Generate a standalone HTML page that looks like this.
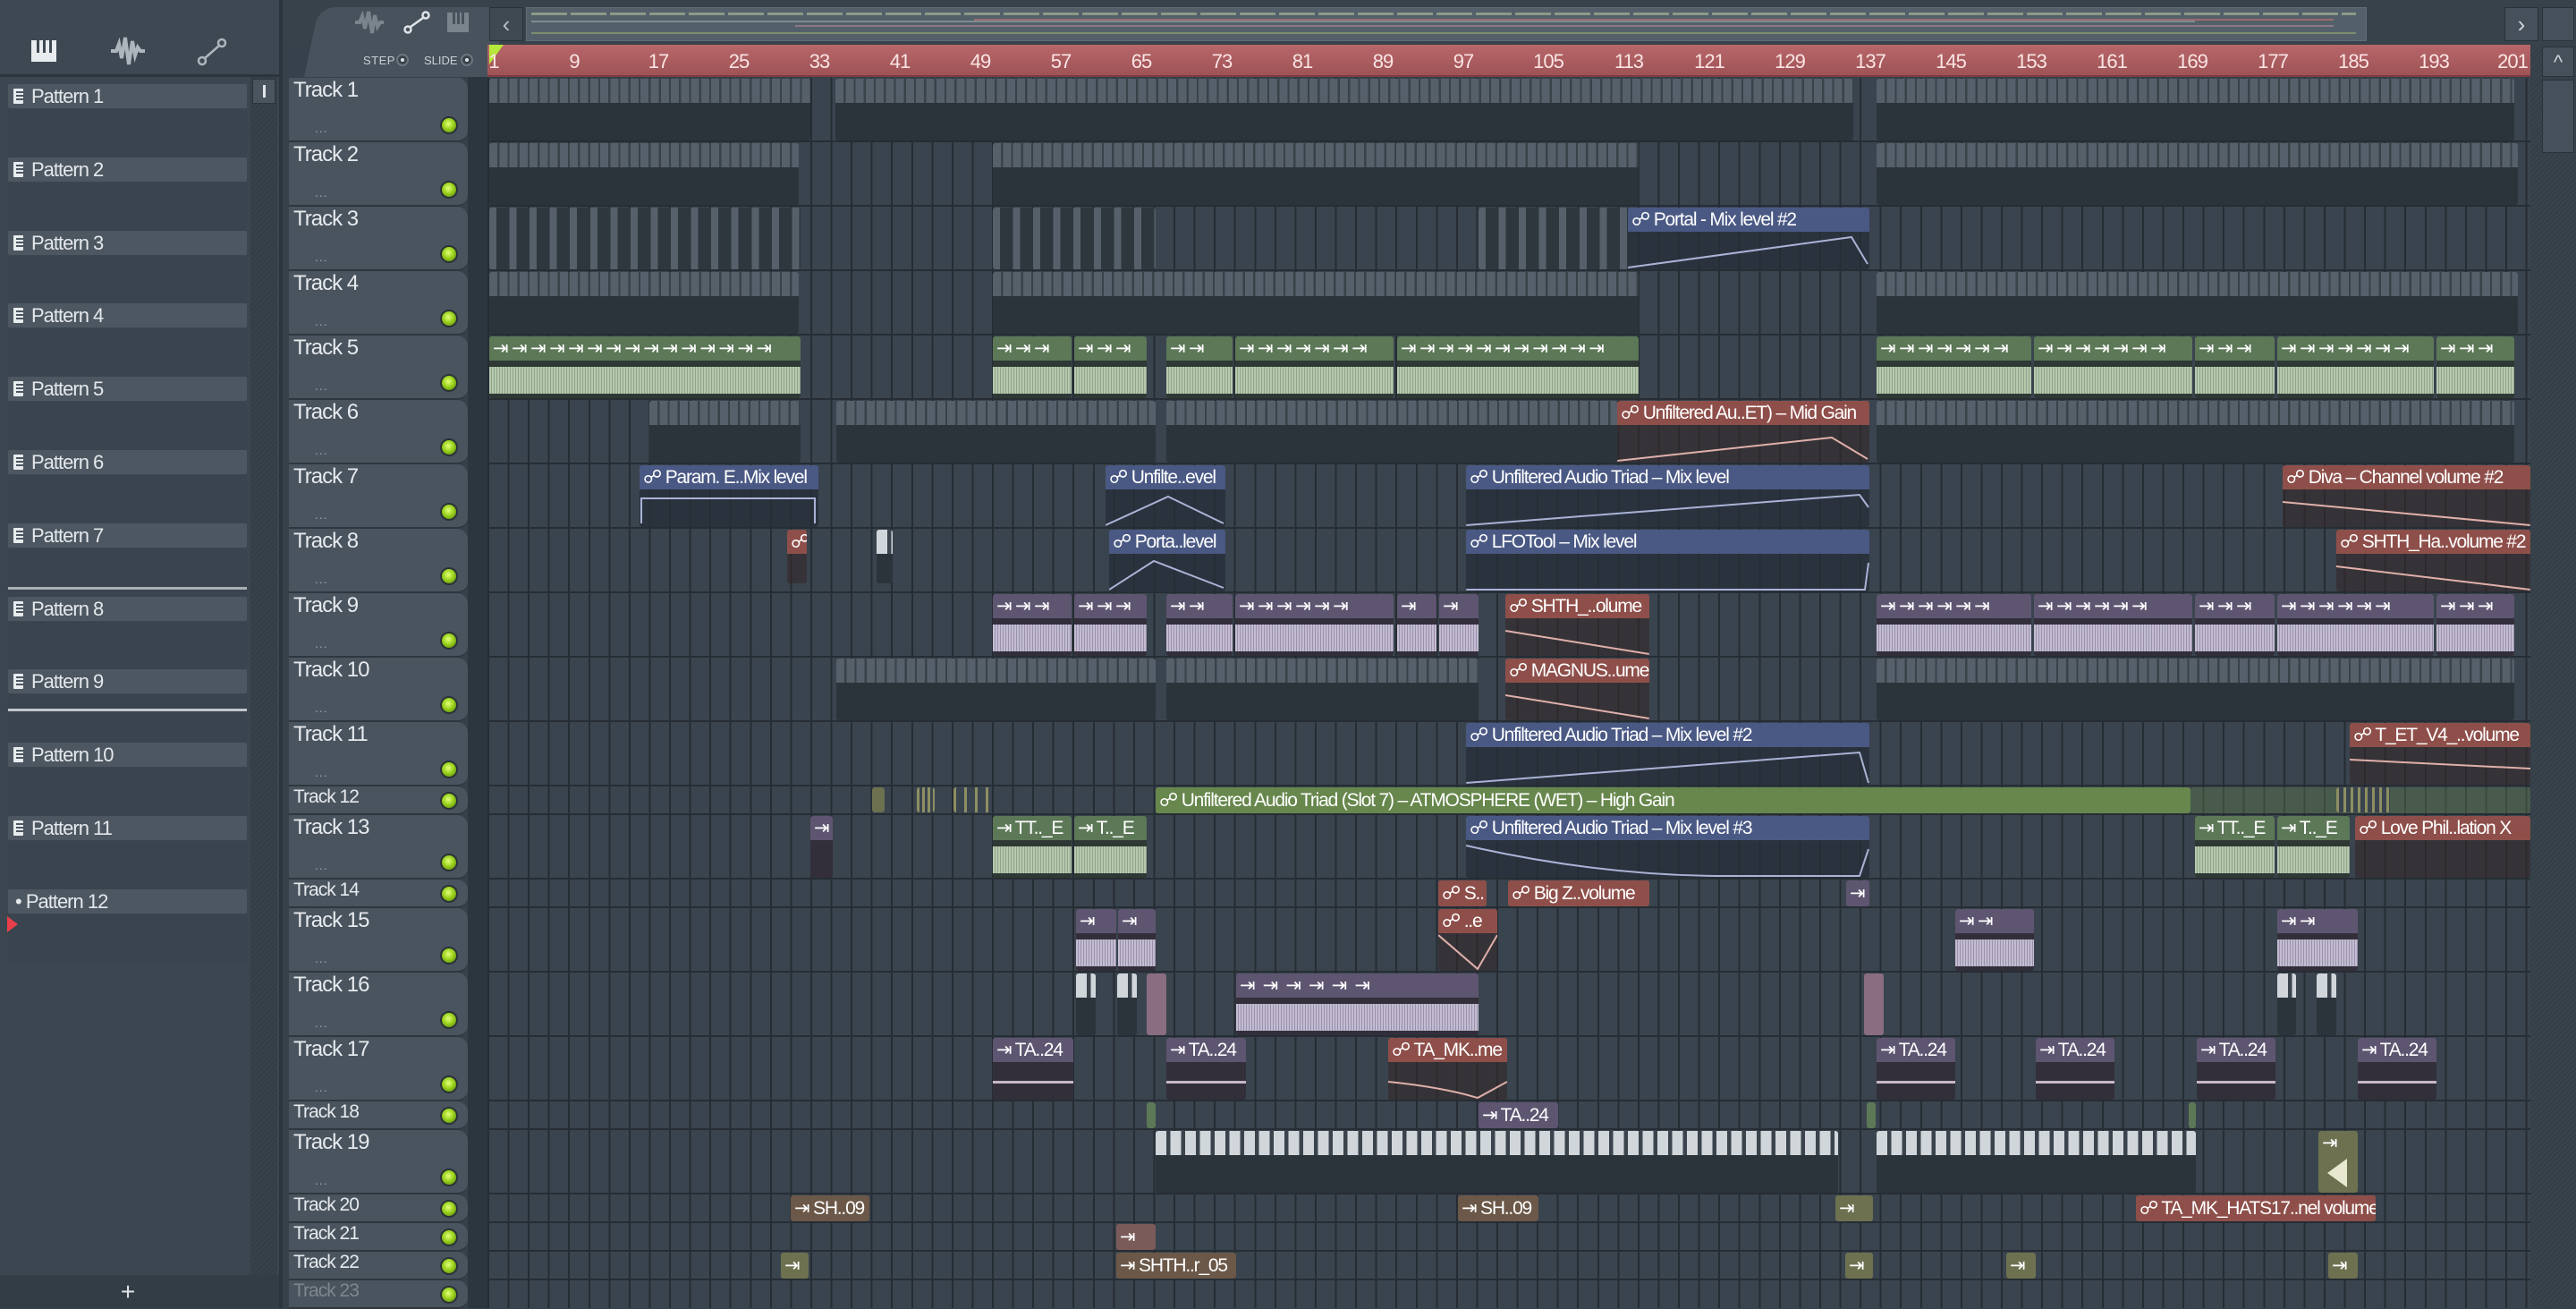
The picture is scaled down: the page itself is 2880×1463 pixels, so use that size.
<!DOCTYPE html>
<html><head><meta charset="utf-8"><style>
*{margin:0;padding:0;box-sizing:border-box}
body{width:2880px;height:1462px;overflow:hidden;background:#36414b;font-family:"Liberation Sans Narrow","Liberation Sans",sans-serif;position:relative}
.a{position:absolute}
#left{left:0;top:0;width:316px;height:1462px;background:#3c4650;border-right:4px solid #2c353d}
.ph{position:absolute;left:9px;width:267px;height:27px;background:#4d5761;color:#e4e8ec;font-size:22px;letter-spacing:-1px;line-height:27px;padding-left:26px;border-radius:2px}
.ph i{position:absolute;left:6px;top:5px;width:11px;height:17px;background:#e8ecef;border-radius:1px}
.ph i:after{content:"";position:absolute;left:3px;top:3px;width:8px;height:2px;background:#4d5761;box-shadow:0 4px 0 #4d5761,0 8px 0 #4d5761}
.pb{position:absolute;left:9px;width:267px;height:54px;background:#3a444e}
.tr{position:absolute;left:323px;width:200px;background:#4a545e;border-radius:0 12px 12px 0;color:#e6eaee;font-size:24px;letter-spacing:-1px;padding-left:5px;border-bottom:2px solid #2e373f}
.led{position:absolute;left:492px;width:20px;height:20px;border-radius:50%;background:radial-gradient(circle at 45% 40%,#e2ff7a,#9bd21e 45%,#4e7a08);border:2px solid #2a3238}
.dots{position:absolute;left:352px;color:#9aa3ab;font-size:14px;letter-spacing:1px}
#grid{left:545px;top:87px;width:2284px;height:1375px;background:repeating-linear-gradient(90deg,#252c33 0 2px,#3a444e 2px 22.56px)}
.rl{position:absolute;left:545px;width:2284px;height:2px;background:#262d34}
.c{position:absolute;overflow:hidden;border-radius:3px}
.h{height:27px;line-height:27px;font-size:21px;letter-spacing:-1.2px;color:#fff;white-space:nowrap;padding-left:4px;overflow:hidden}
.s .h{height:30px;line-height:30px}
.p{background:repeating-linear-gradient(90deg,#56606a 0 9px,#394249 9px 11.28px) top/100% 27px no-repeat,#2b333b}
.pw{background:repeating-linear-gradient(90deg,#d0d6da 0 12px,#3b444c 12px 16.5px) top/100% 27px no-repeat,#2b333b}
.ag{background:#2e3834}.ag .h{background:#5c7857}
.pu{background:#322f3b}.pu .h{background:#5e5571}
.w{position:absolute;left:0;right:0;top:34px;height:30px;background:repeating-linear-gradient(90deg,#b6c9af 0 2px,#8fa488 2px 3px)}
.pu .w{background:repeating-linear-gradient(90deg,#c3bcd2 0 2px,#9a92ab 2px 3px)}
.ab{background:rgba(38,45,56,.75)}.ab .h{background:#4a5984}
.ar{background:rgba(52,40,42,.6)}.ar .h{background:#8e4f4a}
.agr .h,.agr{background:#67874d}
.br{background:#6b5848}.ol{background:#6d7150}
.pk{background:#8a6d80}
svg.ln{position:absolute;left:0;top:27px}
.rn{position:absolute;top:56px;color:#fbe4e4;font-size:22px;letter-spacing:-1px;transform:translateX(-50%)}
</style></head><body>

<div id="left" class="a">
 <div class="a" style="left:0;top:0;width:312px;height:86px;background:#3e4852;border-bottom:3px solid #2c353d"></div>
 <svg class="a" style="left:34px;top:44px" width="30" height="26"><rect x="1" y="1" width="28" height="24" fill="#e8ecef"/><rect x="7" y="1" width="3" height="14" fill="#3e4852"/><rect x="14" y="1" width="3" height="14" fill="#3e4852"/><rect x="21" y="1" width="3" height="14" fill="#3e4852"/></svg>
 <svg class="a" style="left:122px;top:40px" width="42" height="34"><path d="M2 17H8L11 9L14 25L18 2L22 32L26 6L29 22L32 13L35 17H40" stroke="#aeb6bd" stroke-width="4" fill="none"/></svg>
 <svg class="a" style="left:220px;top:42px" width="34" height="32"><circle cx="6" cy="26" r="4" stroke="#aeb6bd" stroke-width="2.5" fill="none"/><circle cx="28" cy="6" r="4" stroke="#aeb6bd" stroke-width="2.5" fill="none"/><path d="M9 23L25 9" stroke="#aeb6bd" stroke-width="2.5"/></svg>
 <div class="a" style="left:280px;top:86px;width:30px;height:1340px;background:repeating-linear-gradient(135deg,#333d46 0 2px,#38424b 2px 4px)"></div>
 <div class="a" style="left:282px;top:88px;width:26px;height:28px;background:#4b555f;border:1px solid #2c353d"><div class="a" style="left:11px;top:6px;width:3px;height:14px;background:#e0e4e8"></div></div>
 <div class="a" style="left:0;top:1425px;width:312px;height:37px;background:#333d46"></div>
 <div class="a" style="left:130px;top:1425px;width:26px;color:#e0e4e8;font-size:28px;text-align:center;line-height:37px">+</div>
</div>
<div class="ph" style="top:94px"><i></i>Pattern 1</div><div class="pb" style="top:122px"></div>
<div class="ph" style="top:176px"><i></i>Pattern 2</div><div class="pb" style="top:204px"></div>
<div class="ph" style="top:258px"><i></i>Pattern 3</div><div class="pb" style="top:286px"></div>
<div class="ph" style="top:339px"><i></i>Pattern 4</div><div class="pb" style="top:367px"></div>
<div class="ph" style="top:421px"><i></i>Pattern 5</div><div class="pb" style="top:449px"></div>
<div class="ph" style="top:503px"><i></i>Pattern 6</div><div class="pb" style="top:531px"></div>
<div class="ph" style="top:585px"><i></i>Pattern 7</div><div class="pb" style="top:613px"></div>
<div class="ph" style="top:667px"><i></i>Pattern 8</div><div class="pb" style="top:695px"></div>
<div class="ph" style="top:748px"><i></i>Pattern 9</div><div class="pb" style="top:776px"><div class="a" style="left:0;top:16px;width:267px;height:3px;background:#c0c6cc"></div></div>
<div class="ph" style="top:830px"><i></i>Pattern 10</div><div class="pb" style="top:858px"></div>
<div class="ph" style="top:912px"><i></i>Pattern 11</div><div class="pb" style="top:940px"></div>
<div class="ph" style="top:994px;padding-left:8px">• Pattern 12</div><div class="pb" style="top:1022px"></div>
<div class="a" style="left:8px;top:1024px;width:0;height:0;border-left:12px solid #e8404a;border-top:9px solid transparent;border-bottom:9px solid transparent"></div>
<div class="a" style="left:9px;top:656px;width:267px;height:3px;background:#a8b0b6"></div>

<div class="a" style="left:316px;top:0;width:2564px;height:50px;background:#38424b"></div>
<div class="a" style="left:340px;top:8px;width:210px;height:78px;background:#48525c;border-radius:18px 0 0 0;transform:skewX(-12deg);transform-origin:bottom left"></div>
<svg class="a" style="left:395px;top:12px" width="36" height="26"><path d="M2 13H7L10 6L13 20L17 1L21 25L24 5L27 18L30 13H34" stroke="#7a848d" stroke-width="4" fill="none"/></svg>
<svg class="a" style="left:451px;top:12px" width="30" height="26"><circle cx="5" cy="21" r="3.5" stroke="#e0e4e8" stroke-width="2.5" fill="none"/><circle cx="25" cy="5" r="3.5" stroke="#e0e4e8" stroke-width="2.5" fill="none"/><path d="M8 18L22 8" stroke="#e0e4e8" stroke-width="2.5"/></svg>
<svg class="a" style="left:500px;top:14px" width="24" height="22"><rect width="24" height="22" fill="#7a848d"/><rect x="6" y="0" width="3" height="13" fill="#48525c"/><rect x="11" y="0" width="3" height="13" fill="#48525c"/><rect x="16" y="0" width="3" height="13" fill="#48525c"/></svg>
<div class="a" style="left:406px;top:60px;color:#c8cfd5;font-size:13px;letter-spacing:0.5px">STEP</div>
<div class="a" style="left:443px;top:60px;width:14px;height:14px;border-radius:50%;background:#3a434c;border:2px solid #6c767f"><div class="a" style="left:3px;top:3px;width:4px;height:4px;border-radius:50%;background:#dfe3e6"></div></div>
<div class="a" style="left:474px;top:60px;color:#c8cfd5;font-size:13px">SLIDE</div>
<div class="a" style="left:515px;top:60px;width:14px;height:14px;border-radius:50%;background:#3a434c;border:2px solid #6c767f"><div class="a" style="left:3px;top:3px;width:4px;height:4px;border-radius:50%;background:#dfe3e6"></div></div>
<div class="a" style="left:547px;top:8px;width:38px;height:38px;background:#3f4952;border:1px solid #2a3239;color:#b8c0c6;font-size:26px;text-align:center;line-height:36px">‹</div>
<div class="a" style="left:588px;top:8px;width:2058px;height:38px;background:#53606a;border:1px solid #616d77">
 <div class="a" style="left:5px;top:5px;width:2040px;height:3px;background:repeating-linear-gradient(90deg,#8a9a86 0 40px,#53606a 40px 44px)"></div>
 <div class="a" style="left:5px;top:14px;width:1860px;height:2px;background:#7d8c90"></div>
 <div class="a" style="left:500px;top:12px;width:1520px;height:2px;background:#9a6b6d"></div>
 <div class="a" style="left:300px;top:19px;width:1720px;height:2px;background:#8e7686"></div>
 <div class="a" style="left:5px;top:27px;width:2040px;height:2px;background:#7c8e6f"></div>
</div>
<div class="a" style="left:2800px;top:8px;width:38px;height:38px;background:#46505a;border:1px solid #2a3239;color:#cfd5da;font-size:26px;text-align:center;line-height:36px">›</div>
<div class="a" style="left:2842px;top:8px;width:36px;height:38px;background:#46505a;border:1px solid #2a3239"></div>
<div class="a" style="left:545px;top:50px;width:2284px;height:36px;background:linear-gradient(#b86769,#9e5356);border-bottom:2px solid #7a3c40"></div>
<div class="a" style="left:547px;top:50px;width:0;height:0;border-left:16px solid #b6e83a;border-bottom:22px solid transparent"></div>
<div class="a" style="left:0;top:0;width:2880px;height:0">
<span class="rn" style="left:552px">1</span><span class="rn" style="left:642px">9</span><span class="rn" style="left:736px">17</span><span class="rn" style="left:826px">25</span><span class="rn" style="left:916px">33</span><span class="rn" style="left:1006px">41</span><span class="rn" style="left:1096px">49</span><span class="rn" style="left:1186px">57</span><span class="rn" style="left:1276px">65</span><span class="rn" style="left:1366px">73</span><span class="rn" style="left:1456px">81</span><span class="rn" style="left:1546px">89</span><span class="rn" style="left:1636px">97</span><span class="rn" style="left:1731px">105</span><span class="rn" style="left:1821px">113</span><span class="rn" style="left:1911px">121</span><span class="rn" style="left:2001px">129</span><span class="rn" style="left:2091px">137</span><span class="rn" style="left:2181px">145</span><span class="rn" style="left:2271px">153</span><span class="rn" style="left:2361px">161</span><span class="rn" style="left:2451px">169</span><span class="rn" style="left:2541px">177</span><span class="rn" style="left:2631px">185</span><span class="rn" style="left:2721px">193</span><span class="rn" style="left:2809px">201</span>
</div>
<div class="a" style="left:2829px;top:50px;width:51px;height:1412px;background:repeating-linear-gradient(135deg,#343e47 0 2px,#3a444d 2px 4px)"></div>
<div class="a" style="left:2842px;top:52px;width:36px;height:34px;background:#46505a;border:1px solid #2a3239;color:#cfd5da;font-size:22px;text-align:center;line-height:34px">^</div>
<div class="a" style="left:2842px;top:89px;width:36px;height:82px;background:#46505a;border:1px solid #2a3239"></div>

<div class="a" style="left:523px;top:86px;width:22px;height:1376px;background:#2c363e"></div>
<div id="grid" class="a"></div>
<div class="rl" style="top:157px"></div><div class="rl" style="top:229px"></div><div class="rl" style="top:301px"></div><div class="rl" style="top:373px"></div><div class="rl" style="top:445px"></div><div class="rl" style="top:517px"></div><div class="rl" style="top:589px"></div><div class="rl" style="top:661px"></div><div class="rl" style="top:733px"></div><div class="rl" style="top:805px"></div><div class="rl" style="top:877px"></div><div class="rl" style="top:909px"></div><div class="rl" style="top:981px"></div><div class="rl" style="top:1013px"></div><div class="rl" style="top:1085px"></div><div class="rl" style="top:1157px"></div><div class="rl" style="top:1229px"></div><div class="rl" style="top:1261px"></div><div class="rl" style="top:1333px"></div><div class="rl" style="top:1365px"></div><div class="rl" style="top:1397px"></div><div class="rl" style="top:1429px"></div>

<div class="tr" style="top:87px;height:72px">Track 1</div><div class="led" style="top:130px"></div><div class="dots" style="top:135px">...</div>
<div class="tr" style="top:159px;height:72px">Track 2</div><div class="led" style="top:202px"></div><div class="dots" style="top:207px">...</div>
<div class="tr" style="top:231px;height:72px">Track 3</div><div class="led" style="top:274px"></div><div class="dots" style="top:279px">...</div>
<div class="tr" style="top:303px;height:72px">Track 4</div><div class="led" style="top:346px"></div><div class="dots" style="top:351px">...</div>
<div class="tr" style="top:375px;height:72px">Track 5</div><div class="led" style="top:418px"></div><div class="dots" style="top:423px">...</div>
<div class="tr" style="top:447px;height:72px">Track 6</div><div class="led" style="top:490px"></div><div class="dots" style="top:495px">...</div>
<div class="tr" style="top:519px;height:72px">Track 7</div><div class="led" style="top:562px"></div><div class="dots" style="top:567px">...</div>
<div class="tr" style="top:591px;height:72px">Track 8</div><div class="led" style="top:634px"></div><div class="dots" style="top:639px">...</div>
<div class="tr" style="top:663px;height:72px">Track 9</div><div class="led" style="top:706px"></div><div class="dots" style="top:711px">...</div>
<div class="tr" style="top:735px;height:72px">Track 10</div><div class="led" style="top:778px"></div><div class="dots" style="top:783px">...</div>
<div class="tr" style="top:807px;height:72px">Track 11</div><div class="led" style="top:850px"></div><div class="dots" style="top:855px">...</div>
<div class="tr" style="top:879px;height:32px;font-size:21px">Track 12</div><div class="led" style="top:885px"></div>
<div class="tr" style="top:911px;height:72px">Track 13</div><div class="led" style="top:954px"></div><div class="dots" style="top:959px">...</div>
<div class="tr" style="top:983px;height:32px;font-size:21px">Track 14</div><div class="led" style="top:989px"></div>
<div class="tr" style="top:1015px;height:72px">Track 15</div><div class="led" style="top:1058px"></div><div class="dots" style="top:1063px">...</div>
<div class="tr" style="top:1087px;height:72px">Track 16</div><div class="led" style="top:1130px"></div><div class="dots" style="top:1135px">...</div>
<div class="tr" style="top:1159px;height:72px">Track 17</div><div class="led" style="top:1202px"></div><div class="dots" style="top:1207px">...</div>
<div class="tr" style="top:1231px;height:32px;font-size:21px">Track 18</div><div class="led" style="top:1237px"></div>
<div class="tr" style="top:1263px;height:72px">Track 19</div><div class="led" style="top:1306px"></div><div class="dots" style="top:1311px">...</div>
<div class="tr" style="top:1335px;height:32px;font-size:21px">Track 20</div><div class="led" style="top:1341px"></div>
<div class="tr" style="top:1367px;height:32px;font-size:21px">Track 21</div><div class="led" style="top:1373px"></div>
<div class="tr" style="top:1399px;height:32px;font-size:21px">Track 22</div><div class="led" style="top:1405px"></div>
<div class="tr" style="top:1431px;height:32px;font-size:21px;color:#7e878f">Track 23</div><div class="led" style="top:1437px"></div>

<div class="c p" style="left:547px;top:88px;width:359px;height:69px"></div>
<div class="c p" style="left:934px;top:88px;width:1138px;height:69px"></div>
<div class="c p" style="left:2098px;top:88px;width:713px;height:69px"></div>
<div class="c p" style="left:547px;top:160px;width:346px;height:69px"></div>
<div class="c p" style="left:1110px;top:160px;width:722px;height:69px"></div>
<div class="c p" style="left:2098px;top:160px;width:717px;height:69px"></div>
<div class="c p" style="left:547px;top:232px;width:348px;height:69px;background:repeating-linear-gradient(90deg,#56606a 0 8px,#2e363e 8px 22.56px)"></div>
<div class="c p" style="left:1110px;top:232px;width:182px;height:69px;background:repeating-linear-gradient(90deg,#56606a 0 8px,#2e363e 8px 22.56px)"></div>
<div class="c p" style="left:1653px;top:232px;width:167px;height:69px;background:repeating-linear-gradient(90deg,#56606a 0 8px,#2e363e 8px 22.56px)"></div>
<div class="c ab" style="left:1820px;top:232px;width:270px;height:69px"><div class="h">☍ Portal - Mix level #2</div><svg class="ln" width="270" height="42"><path d="M0 40L250 6L268 36" stroke="#aab3d6" stroke-width="2" fill="none"/></svg></div>
<div class="c p" style="left:547px;top:304px;width:346px;height:69px"></div>
<div class="c p" style="left:1110px;top:304px;width:722px;height:69px"></div>
<div class="c p" style="left:2098px;top:304px;width:717px;height:69px"></div>
<div class="c ag" style="left:547px;top:376px;width:348px;height:69px"><div class="h">⇥ ⇥ ⇥ ⇥ ⇥ ⇥ ⇥ ⇥ ⇥ ⇥ ⇥ ⇥ ⇥ ⇥ ⇥</div><div class="w"></div></div>
<div class="c ag" style="left:1110px;top:376px;width:88px;height:69px"><div class="h">⇥ ⇥ ⇥</div><div class="w"></div></div>
<div class="c ag" style="left:1201px;top:376px;width:81px;height:69px"><div class="h">⇥ ⇥ ⇥</div><div class="w"></div></div>
<div class="c ag" style="left:1304px;top:376px;width:74px;height:69px"><div class="h">⇥ ⇥</div><div class="w"></div></div>
<div class="c ag" style="left:1381px;top:376px;width:177px;height:69px"><div class="h">⇥ ⇥ ⇥ ⇥ ⇥ ⇥ ⇥</div><div class="w"></div></div>
<div class="c ag" style="left:1562px;top:376px;width:270px;height:69px"><div class="h">⇥ ⇥ ⇥ ⇥ ⇥ ⇥ ⇥ ⇥ ⇥ ⇥ ⇥</div><div class="w"></div></div>
<div class="c ag" style="left:2098px;top:376px;width:173px;height:69px"><div class="h">⇥ ⇥ ⇥ ⇥ ⇥ ⇥ ⇥</div><div class="w"></div></div>
<div class="c ag" style="left:2274px;top:376px;width:177px;height:69px"><div class="h">⇥ ⇥ ⇥ ⇥ ⇥ ⇥ ⇥</div><div class="w"></div></div>
<div class="c ag" style="left:2454px;top:376px;width:89px;height:69px"><div class="h">⇥ ⇥ ⇥</div><div class="w"></div></div>
<div class="c ag" style="left:2546px;top:376px;width:175px;height:69px"><div class="h">⇥ ⇥ ⇥ ⇥ ⇥ ⇥ ⇥</div><div class="w"></div></div>
<div class="c ag" style="left:2724px;top:376px;width:87px;height:69px"><div class="h">⇥ ⇥ ⇥</div><div class="w"></div></div>
<div class="c p" style="left:726px;top:448px;width:169px;height:69px"></div>
<div class="c p" style="left:935px;top:448px;width:357px;height:69px"></div>
<div class="c p" style="left:1304px;top:448px;width:504px;height:69px"></div>
<div class="c p" style="left:2098px;top:448px;width:713px;height:69px"></div>
<div class="c ar" style="left:1808px;top:448px;width:282px;height:69px"><div class="h">☍ Unfiltered Au..ET) – Mid Gain</div><svg class="ln" width="282" height="42"><path d="M0 40L240 14L280 38" stroke="#e0b0aa" stroke-width="2" fill="none"/></svg></div>
<div class="c ab" style="left:715px;top:520px;width:200px;height:69px"><div class="h">☍ Param. E..Mix level</div><svg class="ln" width="200" height="42"><path d="M2 38V10H196V38" stroke="#aab3d6" stroke-width="2" fill="none"/></svg></div>
<div class="c ab" style="left:1236px;top:520px;width:134px;height:69px"><div class="h">☍ Unfilte..evel</div><svg class="ln" width="134" height="42"><path d="M0 40L70 8L132 38" stroke="#aab3d6" stroke-width="2" fill="none"/></svg></div>
<div class="c ab" style="left:1639px;top:520px;width:451px;height:69px"><div class="h">☍ Unfiltered Audio Triad – Mix level</div><svg class="ln" width="451" height="42"><path d="M0 40L440 6L450 20" stroke="#aab3d6" stroke-width="2" fill="none"/></svg></div>
<div class="c ar" style="left:2552px;top:520px;width:277px;height:69px"><div class="h">☍ Diva – Channel volume #2</div><svg class="ln" width="277" height="42"><path d="M0 14L277 40" stroke="#e0b0aa" stroke-width="2" fill="none"/></svg></div>
<div class="c ar" style="left:880px;top:592px;width:22px;height:60px"><div class="h">☍</div></div>
<div class="c pw" style="left:980px;top:592px;width:18px;height:60px"></div>
<div class="c ab" style="left:1240px;top:592px;width:130px;height:69px"><div class="h">☍ Porta..level</div><svg class="ln" width="130" height="42"><path d="M0 40L50 8L128 38" stroke="#aab3d6" stroke-width="2" fill="none"/></svg></div>
<div class="c ab" style="left:1639px;top:592px;width:451px;height:69px"><div class="h">☍ LFOTool – Mix level</div><svg class="ln" width="451" height="42"><path d="M0 40L446 40L450 10" stroke="#aab3d6" stroke-width="2" fill="none"/></svg></div>
<div class="c ar" style="left:2612px;top:592px;width:217px;height:69px"><div class="h">☍ SHTH_Ha..volume #2</div><svg class="ln" width="217" height="42"><path d="M0 14L217 40" stroke="#e0b0aa" stroke-width="2" fill="none"/></svg></div>
<div class="c pu" style="left:1110px;top:664px;width:88px;height:69px"><div class="h">⇥ ⇥ ⇥</div><div class="w"></div></div>
<div class="c pu" style="left:1201px;top:664px;width:81px;height:69px"><div class="h">⇥ ⇥ ⇥</div><div class="w"></div></div>
<div class="c pu" style="left:1304px;top:664px;width:74px;height:69px"><div class="h">⇥ ⇥</div><div class="w"></div></div>
<div class="c pu" style="left:1381px;top:664px;width:177px;height:69px"><div class="h">⇥ ⇥ ⇥ ⇥ ⇥ ⇥</div><div class="w"></div></div>
<div class="c pu" style="left:1562px;top:664px;width:44px;height:69px"><div class="h">⇥</div><div class="w"></div></div>
<div class="c pu" style="left:1609px;top:664px;width:44px;height:69px"><div class="h">⇥</div><div class="w"></div></div>
<div class="c ar" style="left:1683px;top:664px;width:161px;height:69px"><div class="h">☍ SHTH_..olume</div><svg class="ln" width="161" height="42"><path d="M0 14L161 40" stroke="#e0b0aa" stroke-width="2" fill="none"/></svg></div>
<div class="c pu" style="left:2098px;top:664px;width:173px;height:69px"><div class="h">⇥ ⇥ ⇥ ⇥ ⇥ ⇥</div><div class="w"></div></div>
<div class="c pu" style="left:2274px;top:664px;width:177px;height:69px"><div class="h">⇥ ⇥ ⇥ ⇥ ⇥ ⇥</div><div class="w"></div></div>
<div class="c pu" style="left:2454px;top:664px;width:89px;height:69px"><div class="h">⇥ ⇥ ⇥</div><div class="w"></div></div>
<div class="c pu" style="left:2546px;top:664px;width:175px;height:69px"><div class="h">⇥ ⇥ ⇥ ⇥ ⇥ ⇥</div><div class="w"></div></div>
<div class="c pu" style="left:2724px;top:664px;width:87px;height:69px"><div class="h">⇥ ⇥ ⇥</div><div class="w"></div></div>
<div class="c p" style="left:935px;top:736px;width:357px;height:69px"></div>
<div class="c p" style="left:1304px;top:736px;width:349px;height:69px"></div>
<div class="c ar" style="left:1683px;top:736px;width:161px;height:69px"><div class="h">☍ MAGNUS..ume</div><svg class="ln" width="161" height="42"><path d="M0 14L161 40" stroke="#e0b0aa" stroke-width="2" fill="none"/></svg></div>
<div class="c p" style="left:2098px;top:736px;width:713px;height:69px"></div>
<div class="c ab" style="left:1639px;top:808px;width:451px;height:69px"><div class="h">☍ Unfiltered Audio Triad – Mix level #2</div><svg class="ln" width="451" height="42"><path d="M0 40L440 6L450 40" stroke="#aab3d6" stroke-width="2" fill="none"/></svg></div>
<div class="c ar" style="left:2627px;top:808px;width:202px;height:69px"><div class="h">☍ T_ET_V4_..volume</div><svg class="ln" width="202" height="42"><path d="M0 14L202 24" stroke="#e0b0aa" stroke-width="2" fill="none"/></svg></div>
<div class="c ol" style="left:975px;top:880px;width:14px;height:28px"></div>
<div class="c ol" style="left:1025px;top:880px;width:20px;height:28px;background:repeating-linear-gradient(90deg,#8d8f62 0 3px,#3a444e 3px 6px)"></div>
<div class="c ol" style="left:1066px;top:880px;width:42px;height:28px;background:repeating-linear-gradient(90deg,#8d8f62 0 3px,#3a444e 3px 12px)"></div>
<div class="c agr s" style="left:1292px;top:880px;width:1157px;height:29px"><div class="h">☍ Unfiltered Audio Triad (Slot 7) – ATMOSPHERE (WET) – High Gain</div></div>
<div class="c" style="left:2449px;top:880px;width:380px;height:29px;background:rgba(103,135,77,.35)"></div>
<div class="c ol" style="left:2612px;top:880px;width:60px;height:28px;background:repeating-linear-gradient(90deg,#8d8f62 0 3px,#3a444e 3px 8px)"></div>
<div class="c pu" style="left:906px;top:912px;width:25px;height:69px"><div class="h">⇥</div></div>
<div class="c ag" style="left:1110px;top:912px;width:88px;height:69px"><div class="h">⇥ TT.._E</div><div class="w"></div></div>
<div class="c ag" style="left:1201px;top:912px;width:81px;height:69px"><div class="h">⇥ T.._E</div><div class="w"></div></div>
<div class="c ab" style="left:1639px;top:912px;width:451px;height:69px"><div class="h">☍ Unfiltered Audio Triad – Mix level #3</div><svg class="ln" width="451" height="42"><path d="M0 6Q150 40 290 40H440L450 10" stroke="#aab3d6" stroke-width="2" fill="none"/></svg></div>
<div class="c ag" style="left:2454px;top:912px;width:89px;height:69px"><div class="h">⇥ TT.._E</div><div class="w"></div></div>
<div class="c ag" style="left:2546px;top:912px;width:81px;height:69px"><div class="h">⇥ T.._E</div><div class="w"></div></div>
<div class="c ar" style="left:2633px;top:912px;width:196px;height:69px"><div class="h">☍ Love Phil..lation X</div></div>
<div class="c ar s" style="left:1608px;top:984px;width:54px;height:29px;background:#8e4f4a"><div class="h">☍ S..</div></div>
<div class="c ar s" style="left:1686px;top:984px;width:158px;height:29px;background:#8e4f4a"><div class="h">☍ Big Z..volume</div></div>
<div class="c pu s" style="left:2064px;top:984px;width:26px;height:29px;background:#5e5571"><div class="h">⇥</div></div>
<div class="c pu" style="left:1203px;top:1016px;width:45px;height:69px"><div class="h">⇥</div><div class="w"></div></div>
<div class="c pu" style="left:1250px;top:1016px;width:42px;height:69px"><div class="h">⇥</div><div class="w"></div></div>
<div class="c ar" style="left:1608px;top:1016px;width:66px;height:69px"><div class="h">☍ ..e</div><svg class="ln" width="66" height="42"><path d="M0 2L44 40L66 2" stroke="#e0b0aa" stroke-width="2" fill="none"/></svg></div>
<div class="c pu" style="left:2186px;top:1016px;width:88px;height:69px"><div class="h">⇥ ⇥</div><div class="w"></div></div>
<div class="c pu" style="left:2546px;top:1016px;width:90px;height:69px"><div class="h">⇥ ⇥</div><div class="w"></div></div>
<div class="c pw" style="left:1203px;top:1088px;width:22px;height:69px"></div>
<div class="c pw" style="left:1249px;top:1088px;width:22px;height:69px"></div>
<div class="c pk" style="left:1282px;top:1088px;width:22px;height:69px"></div>
<div class="c pu" style="left:1382px;top:1088px;width:271px;height:69px"><div class="h">⇥ &nbsp;⇥ &nbsp;⇥ &nbsp;⇥ &nbsp;⇥ &nbsp;⇥</div><div class="w"></div></div>
<div class="c pk" style="left:2084px;top:1088px;width:22px;height:69px"></div>
<div class="c pw" style="left:2546px;top:1088px;width:21px;height:69px"></div>
<div class="c pw" style="left:2590px;top:1088px;width:22px;height:69px"></div>
<div class="c pu" style="left:1110px;top:1160px;width:90px;height:69px"><div class="h">⇥ TA..24</div><div class="a" style="left:0;top:48px;width:90px;height:3px;background:#c9b7c8"></div></div>
<div class="c pu" style="left:1304px;top:1160px;width:89px;height:69px"><div class="h">⇥ TA..24</div><div class="a" style="left:0;top:48px;width:89px;height:3px;background:#c9b7c8"></div></div>
<div class="c ar" style="left:1552px;top:1160px;width:133px;height:69px"><div class="h">☍ TA_MK..me</div><svg class="ln" width="133" height="42"><path d="M0 22Q60 28 100 40L133 22" stroke="#e0b0aa" stroke-width="2" fill="none"/></svg></div>
<div class="c pu" style="left:2098px;top:1160px;width:88px;height:69px"><div class="h">⇥ TA..24</div><div class="a" style="left:0;top:48px;width:88px;height:3px;background:#c9b7c8"></div></div>
<div class="c pu" style="left:2276px;top:1160px;width:88px;height:69px"><div class="h">⇥ TA..24</div><div class="a" style="left:0;top:48px;width:88px;height:3px;background:#c9b7c8"></div></div>
<div class="c pu" style="left:2456px;top:1160px;width:88px;height:69px"><div class="h">⇥ TA..24</div><div class="a" style="left:0;top:48px;width:88px;height:3px;background:#c9b7c8"></div></div>
<div class="c pu" style="left:2636px;top:1160px;width:88px;height:69px"><div class="h">⇥ TA..24</div><div class="a" style="left:0;top:48px;width:88px;height:3px;background:#c9b7c8"></div></div>
<div class="c" style="left:1282px;top:1232px;width:10px;height:29px;background:#5c7857"></div>
<div class="c pu s" style="left:1653px;top:1232px;width:89px;height:29px;background:#5e5571"><div class="h">⇥ TA..24</div></div>
<div class="c" style="left:2087px;top:1232px;width:10px;height:29px;background:#5c7857"></div>
<div class="c" style="left:2447px;top:1232px;width:8px;height:29px;background:#5c7857"></div>
<div class="c pw" style="left:1292px;top:1264px;width:763px;height:69px"></div>
<div class="c pw" style="left:2098px;top:1264px;width:357px;height:69px"></div>
<div class="c ol" style="left:2592px;top:1264px;width:44px;height:69px"><div class="h">⇥</div><svg class="ln" width="44" height="42"><path d="M10 20L32 4V36Z" fill="#e8e8d0"/></svg></div>
<div class="c br s" style="left:884px;top:1336px;width:88px;height:29px"><div class="h">⇥ SH..09</div></div>
<div class="c br s" style="left:1630px;top:1336px;width:90px;height:29px"><div class="h">⇥ SH..09</div></div>
<div class="c ol s" style="left:2052px;top:1336px;width:42px;height:29px"><div class="h">⇥</div></div>
<div class="c ar s" style="left:2388px;top:1336px;width:268px;height:29px;background:#8e4f4a"><div class="h">☍ TA_MK_HATS17..nel volume</div></div>
<div class="c br s" style="left:1248px;top:1368px;width:44px;height:29px;background:#7b5a5a"><div class="h">⇥</div></div>
<div class="c ol s" style="left:873px;top:1400px;width:31px;height:29px"><div class="h">⇥</div></div>
<div class="c br s" style="left:1248px;top:1400px;width:134px;height:29px"><div class="h">⇥ SHTH..r_05</div></div>
<div class="c ol s" style="left:2063px;top:1400px;width:31px;height:29px"><div class="h">⇥</div></div>
<div class="c ol s" style="left:2243px;top:1400px;width:33px;height:29px"><div class="h">⇥</div></div>
<div class="c ol s" style="left:2603px;top:1400px;width:33px;height:29px"><div class="h">⇥</div></div>
</body></html>
